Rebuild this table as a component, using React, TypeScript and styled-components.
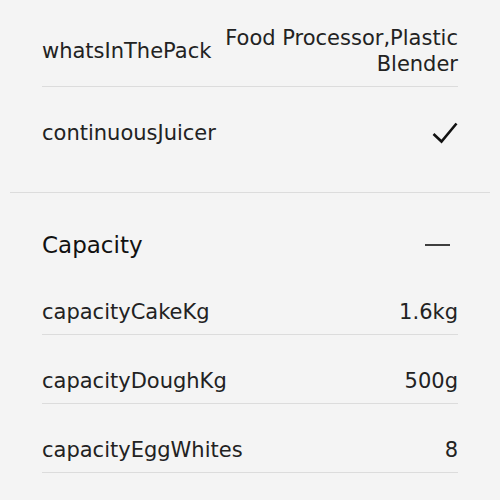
import styled, { createGlobalStyle } from 'styled-components'

const GlobalStyle = createGlobalStyle`
  html, body {
    margin: 0;
    padding: 0;
    background: #f4f4f4;
  }
  body {
    font-family: "DejaVu Sans", "Liberation Sans", sans-serif;
    color: #222;
  }
`

type Spec = { label: string; value: string | boolean }

const general: Spec[] = [
  { label: 'whatsInThePack', value: 'Food Processor,Plastic Blender' },
  { label: 'continuousJuicer', value: true },
]

const capacity: Spec[] = [
  { label: 'capacityCakeKg', value: '1.6kg' },
  { label: 'capacityDoughKg', value: '500g' },
  { label: 'capacityEggWhites', value: '8' },
]

const CheckIcon = () => (
  <svg width="26" height="22" viewBox="0 0 26 22" fill="none">
    <polyline
      points="1.5,12 9.5,19.5 24.5,1.5"
      stroke="#111"
      strokeWidth="2.6"
      strokeLinecap="butt"
      strokeLinejoin="miter"
    />
  </svg>
)

const MinusIcon = () => (
  <svg width="25" height="4" viewBox="0 0 25 4" fill="none">
    <line x1="0" y1="2" x2="25" y2="2" stroke="#111" strokeWidth="1.6" />
  </svg>
)

const SpecRow = ({ spec, last }: { spec: Spec; last?: boolean }) => (
  <Row last={last}>
    <Label>{spec.label}</Label>
    <Value>{spec.value === true ? <CheckIcon /> : spec.value}</Value>
  </Row>
)

export default function App() {
  return (
    <>
      <GlobalStyle />
      <Page>
        <Section>
          <List>
            <SpecRow spec={general[0]} />
            <SpecRow spec={general[1]} last />
          </List>
        </Section>
        <Section>
          <Header>
            <Title>Capacity</Title>
            <MinusIcon />
          </Header>
          <List>
            {capacity.map((s) => (
              <SpecRow key={s.label} spec={s} />
            ))}
          </List>
        </Section>
      </Page>
    </>
  )
}

const Page = styled.div`
  width: 500px;
  height: 500px;
  overflow: hidden;
  padding: 0 10px;
  box-sizing: border-box;
`

const Section = styled.section`
  border-bottom: 1px solid #dcdcdc;
  padding-bottom: 37px;
  &:first-child {
    margin-top: -8px;
  }
  &:last-child {
    border-bottom: none;
  }
`

const List = styled.div`
  padding: 0 32px;
`

const Row = styled.div<{ last?: boolean }>`
  display: flex;
  align-items: center;
  justify-content: space-between;
  gap: 12px;
  padding: 33px 0 9px;
  border-bottom: ${({ last }) => (last ? 'none' : '1px solid #dcdcdc')};
  font-size: 21px;
  line-height: 26px;
`

const Label = styled.span`
  white-space: nowrap;
`

const Value = styled.span`
  text-align: right;
  max-width: 240px;
  display: flex;
  justify-content: flex-end;
`

const Header = styled.div`
  display: flex;
  align-items: center;
  justify-content: space-between;
  padding: 39px 40px 8px 32px;
`

const Title = styled.h2`
  margin: 0;
  font-size: 23px;
  font-weight: 500;
  line-height: 26px;
  color: #111;
`
